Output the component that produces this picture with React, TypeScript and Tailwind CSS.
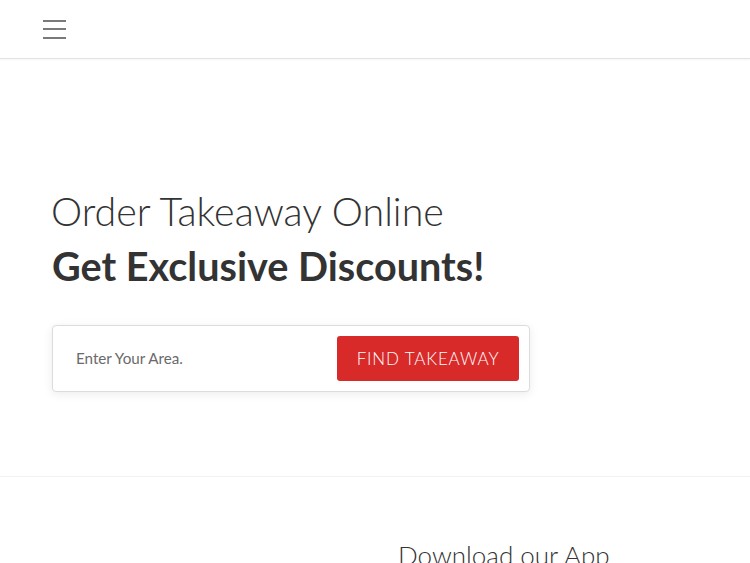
import React from "react";

export default function App() {
  return (
    <div className="min-h-screen bg-white text-[#333] font-['Lato',sans-serif]">
      <header className="h-[59px] border-b border-[#e2e2e2] flex items-center pl-[43px] shadow-[0_1px_2px_rgba(0,0,0,0.04)]">
        <button className="flex flex-col gap-[6.5px] w-[23px]" aria-label="menu">
          <span className="block h-[2px] w-[23px] bg-[#7a7a7a]" />
          <span className="block h-[2px] w-[23px] bg-[#7a7a7a]" />
          <span className="block h-[2px] w-[23px] bg-[#7a7a7a]" />
        </button>
      </header>
      <section className="h-[418px] border-b border-[#f2f2f2] px-[52px] pt-[129px]">
        <h1 className="text-[39.4px] font-light leading-[46px] text-[#333] -ml-[1px]">Order Takeaway Online</h1>
        <h2 className="text-[39.6px] font-bold leading-[48px] text-[#333] mt-[8px]">Get Exclusive Discounts!</h2>
        <div className="mt-[35px] w-[478px] h-[67px] border border-[#dcdcdc] rounded-[4px] bg-white shadow-[0_2px_10px_rgba(0,0,0,0.08)] flex items-center justify-between pl-[23px] pr-[10px]">
          <input
            className="outline-none text-[15.2px] text-[#555] placeholder:text-[#6a6a6a] w-[220px] bg-transparent"
            placeholder="Enter Your Area."
          />
          <button className="h-[45px] w-[182px] bg-[#d92a2a] rounded-[3px] text-white text-[17px] font-light tracking-[0.85px]">
            FIND TAKEAWAY
          </button>
        </div>
      </section>
      <section className="flex">
        <div className="w-[398px]" />
        <h3 className="text-[26px] font-light text-[#333] pt-[62px] leading-[32px]">Download our App</h3>
      </section>
    </div>
  );
}
